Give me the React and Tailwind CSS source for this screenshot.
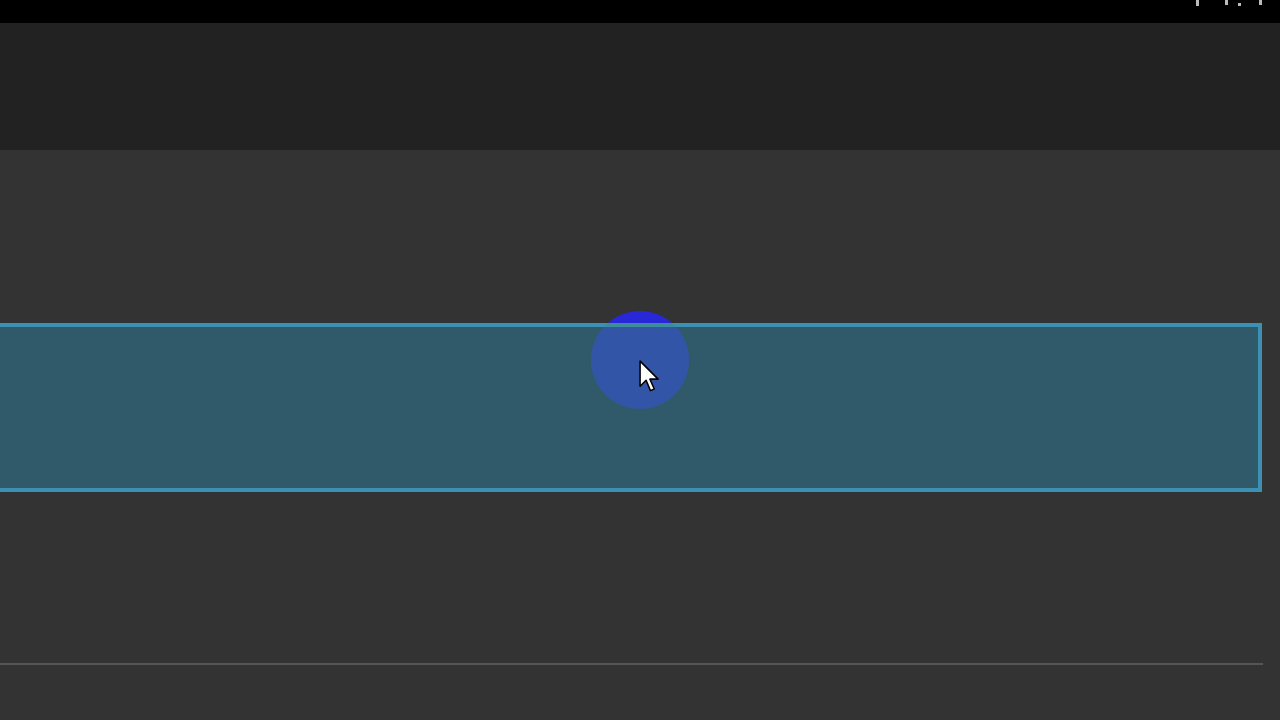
import React from "react";

const Cursor = () => (
  <svg width="24" height="35" viewBox="0 0 22 32" className="absolute left-[48px] top-[49px]">
    <path
      d="M1 1 L1 24 L6.5 18.5 L10.5 28 L14 26.5 L10 17.5 L17.5 17.5 Z"
      fill="#ffffff"
      stroke="#000000"
      strokeWidth="1.4"
      strokeLinejoin="round"
    />
  </svg>
);

const App = () => {
  return (
    <div className="w-[1280px] h-[720px] overflow-hidden bg-[#333333] flex flex-col font-['Liberation_Sans',sans-serif]">
      <div className="h-[23px] bg-black flex justify-end items-start gap-[10px] pr-[18px] shrink-0">
        <span className="w-[3px] h-[6px] bg-[#bbbbbb] mt-0" />
        <span className="w-[3px] h-[5px] bg-[#bbbbbb] ml-[16px]" />
        <span className="w-[3px] h-[3px] bg-[#bbbbbb] mt-[3px]" />
        <span className="w-[3px] h-[5px] bg-[#bbbbbb] ml-[8px]" />
      </div>
      <div className="h-[127px] bg-[#222222] shrink-0" />
      <div className="flex-1 bg-[#333333]">
        <div className="h-[173px]" />
        <div className="relative w-[1262px] h-[169px] bg-[#305a6a] border-4 border-l-0 border-[#3b90b4]">
          <div className="absolute left-[591px] top-[-16px] w-[98px] h-[98px] rounded-full bg-[linear-gradient(to_bottom,#2828d8_0%,#2828d8_12%,#3c8c9a_12%,#3c8c9a_16%,#3355a8_16%,#3355a8_100%)]">
            <Cursor />
          </div>
        </div>
        <div className="h-[171px]" />
        <div className="w-[1263px] h-[2px] bg-[#555555]" />
      </div>
    </div>
  );
};

export default App;
